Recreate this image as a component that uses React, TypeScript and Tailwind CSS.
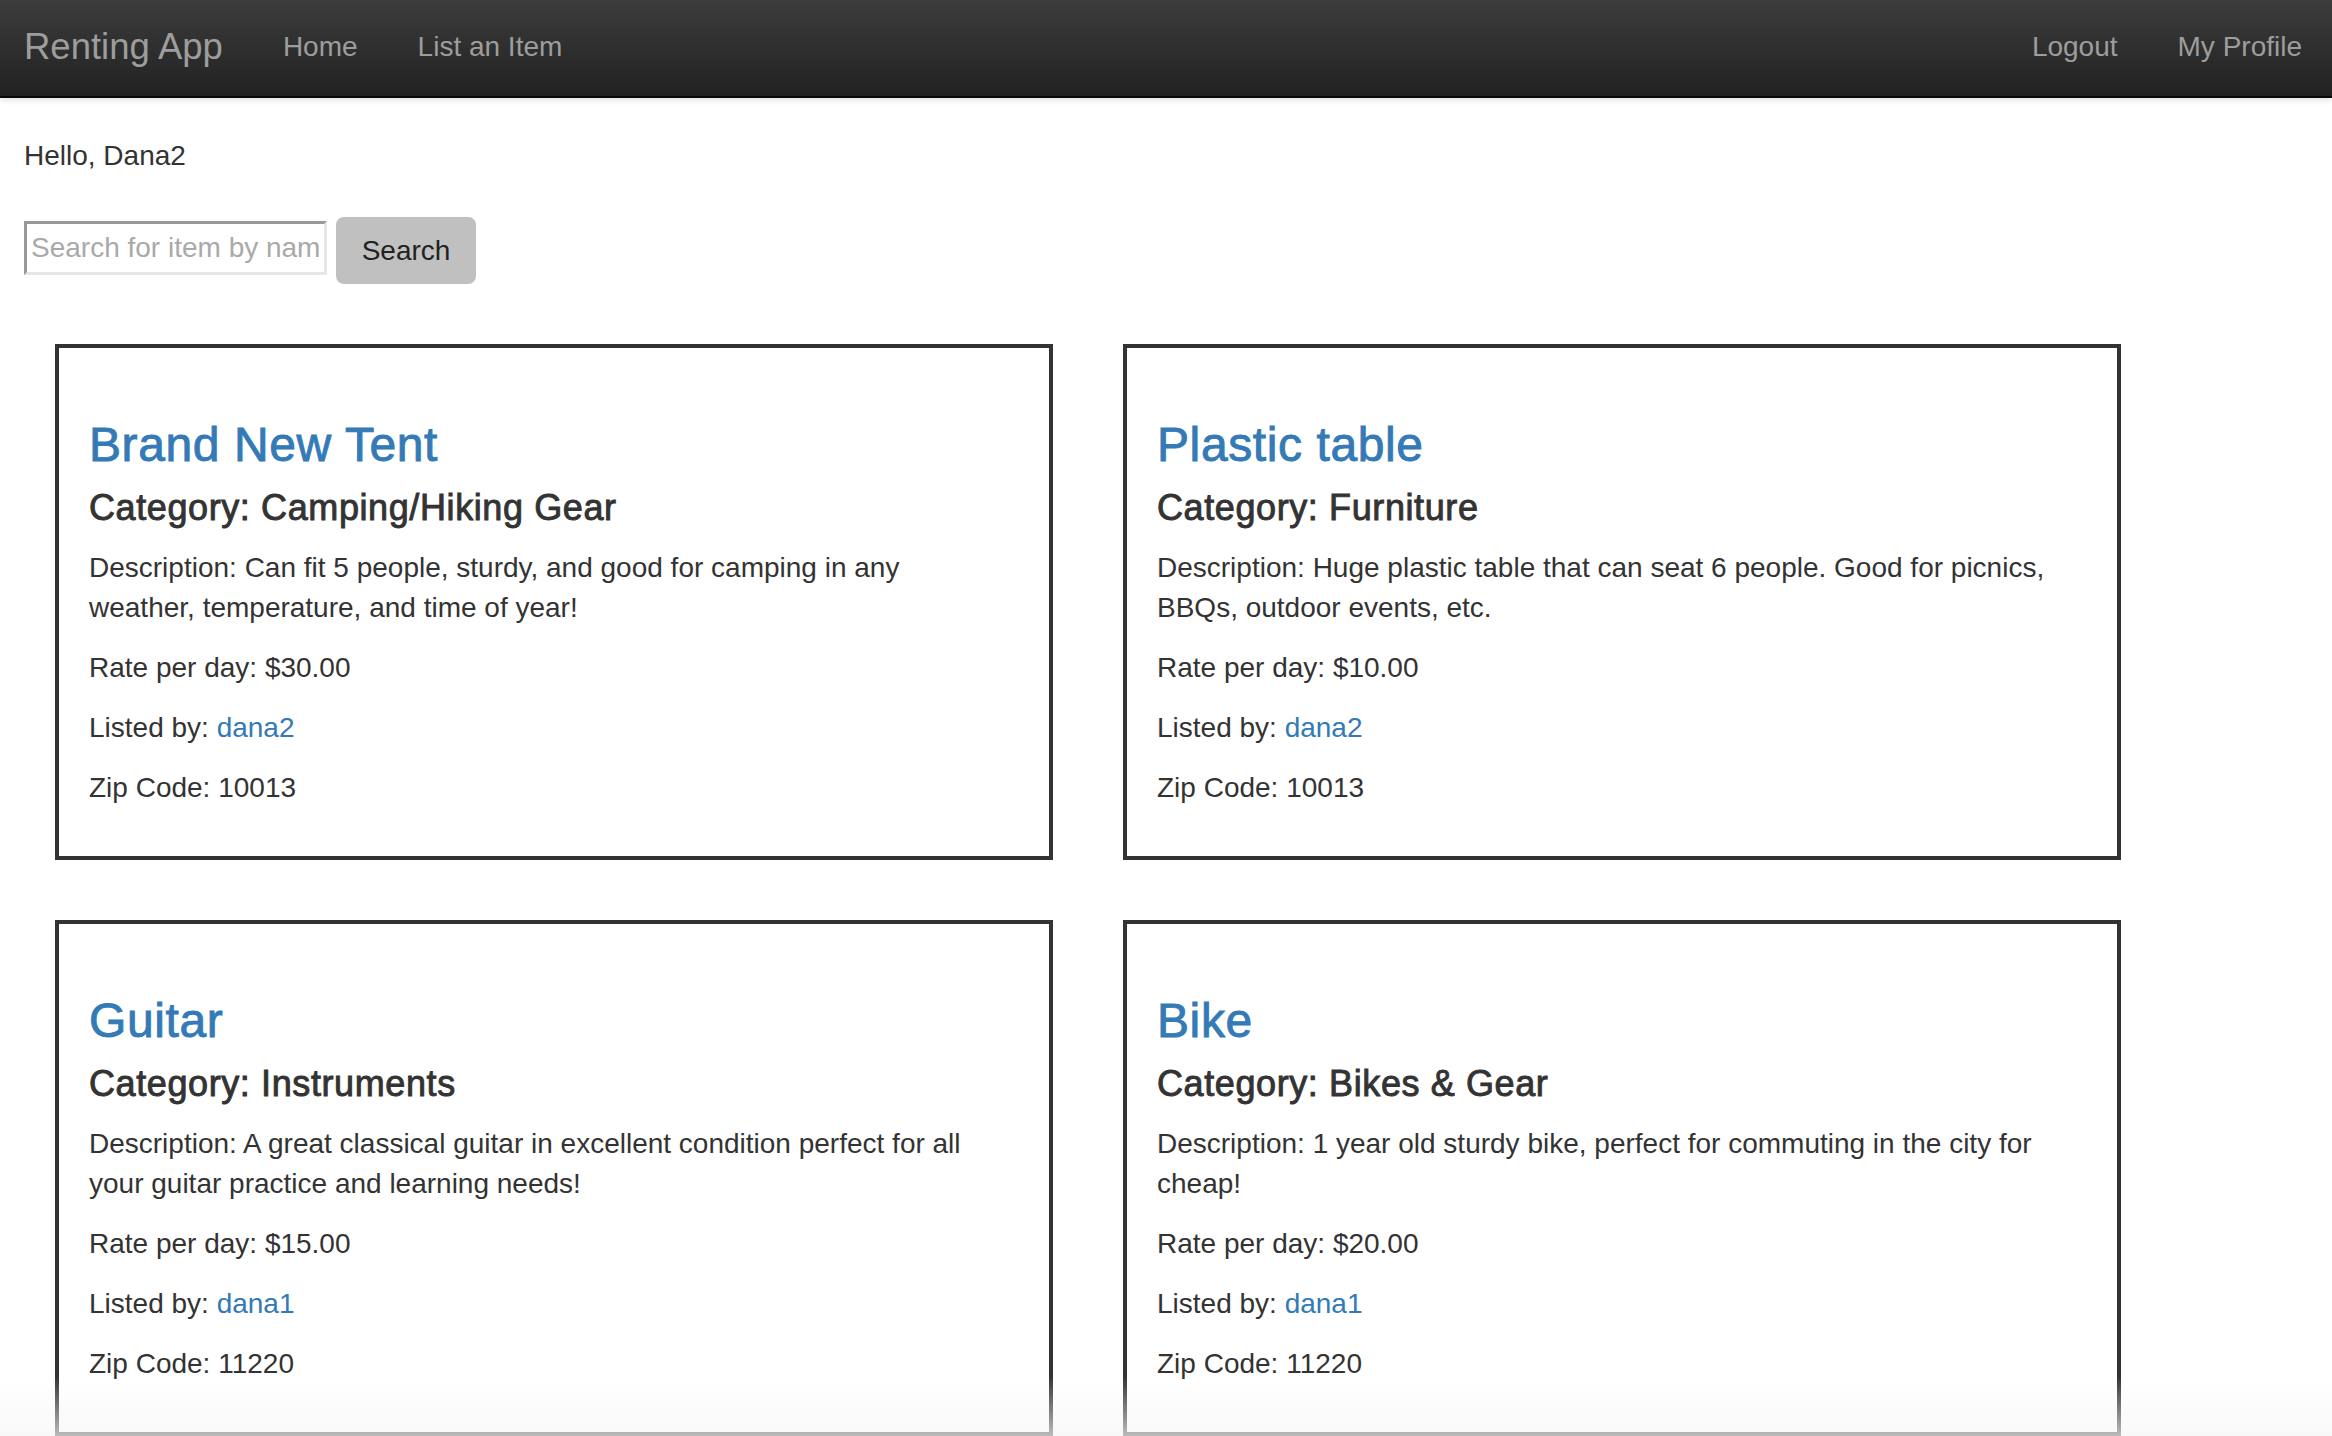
const items = [
  {
    title: "Brand New Tent",
    category: "Camping/Hiking Gear",
    description:
      "Can fit 5 people, sturdy, and good for camping in any weather, temperature, and time of year!",
    rate: "$30.00",
    owner: "dana2",
    zip: "10013",
  },
  {
    title: "Plastic table",
    category: "Furniture",
    description:
      "Huge plastic table that can seat 6 people. Good for picnics, BBQs, outdoor events, etc.",
    rate: "$10.00",
    owner: "dana2",
    zip: "10013",
  },
  {
    title: "Guitar",
    category: "Instruments",
    description:
      "A great classical guitar in excellent condition perfect for all your guitar practice and learning needs!",
    rate: "$15.00",
    owner: "dana1",
    zip: "11220",
  },
  {
    title: "Bike",
    category: "Bikes & Gear",
    description:
      "1 year old sturdy bike, perfect for commuting in the city for cheap!",
    rate: "$20.00",
    owner: "dana1",
    zip: "11220",
  },
];

type Item = (typeof items)[number];

const ItemCard: React.FC<{ item: Item }> = ({ item }) => (
  <div className="w-[998px] border-[4px] border-[#333] pl-[30px] pr-[50px] pt-[70px] pb-[28px]">
    <h3 className="text-[48px] leading-[53px] tracking-[0.6px] text-[#337ab7] [-webkit-text-stroke:0.9px_#337ab7]">
      <a href="#">{item.title}</a>
    </h3>
    <h4 className="mt-[17px] text-[36px] leading-[40px] tracking-[0.6px] text-[#333] [-webkit-text-stroke:0.9px_#333]">
      Category: {item.category}
    </h4>
    <p className="mt-[20px] mb-[20px]">Description: {item.description}</p>
    <p className="mb-[20px]">Rate per day: {item.rate}</p>
    <p className="mb-[20px]">
      Listed by:{" "}
      <a href="#" className="text-[#337ab7]">
        {item.owner}
      </a>
    </p>
    <p className="mb-[20px]">Zip Code: {item.zip}</p>
  </div>
);

export default function App() {
  return (
    <div className="min-h-screen bg-white font-['Liberation_Sans',Arial,sans-serif] text-[28px] leading-[40px] text-[#333]">
      <nav className="flex h-[98px] items-center justify-between border-b-2 border-[#080808] bg-gradient-to-b from-[#3c3c3c] to-[#222] pb-[2px] shadow-[0_2px_6px_rgba(0,0,0,0.12)]">
        <div className="flex items-center">
          <a href="#" className="pl-[24px] pr-[30px] text-[36.5px] text-[#9d9d9d]">
            Renting App
          </a>
          <a href="#" className="px-[30px] text-[#9d9d9d]">
            Home
          </a>
          <a href="#" className="px-[30px] text-[#9d9d9d]">
            List an Item
          </a>
        </div>
        <div className="flex items-center">
          <a href="#" className="px-[30px] text-[#9d9d9d]">
            Logout
          </a>
          <a href="#" className="px-[30px] text-[#9d9d9d]">
            My Profile
          </a>
        </div>
      </nav>

      <div className="px-[24px] pt-[38px]">
        <p>Hello, Dana2</p>
        <div className="mt-[36px] flex items-center gap-[9px]">
          <input
            type="text"
            placeholder="Search for item by name"
            className="h-[54px] w-[303px] border-[3px] border-t-[#999] border-l-[#999] border-r-[#e6e6e6] border-b-[#e6e6e6] px-[4px] text-[28px] outline-none placeholder:text-[#a9a9a9]"
          />
          <button className="mt-[5px] h-[67px] w-[140px] rounded-[8px] bg-[#c0c0c0] text-[28px] text-[#222]">
            Search
          </button>
        </div>
      </div>

      <div className="mt-[60px] flex flex-wrap gap-x-[70px] gap-y-[60px] pl-[55px]">
        {items.map((item) => (
          <ItemCard key={item.title} item={item} />
        ))}
      </div>

      <div className="pointer-events-none fixed bottom-0 left-0 h-[60px] w-full bg-gradient-to-b from-transparent to-[#f5f5f5]/70" />
    </div>
  );
}
